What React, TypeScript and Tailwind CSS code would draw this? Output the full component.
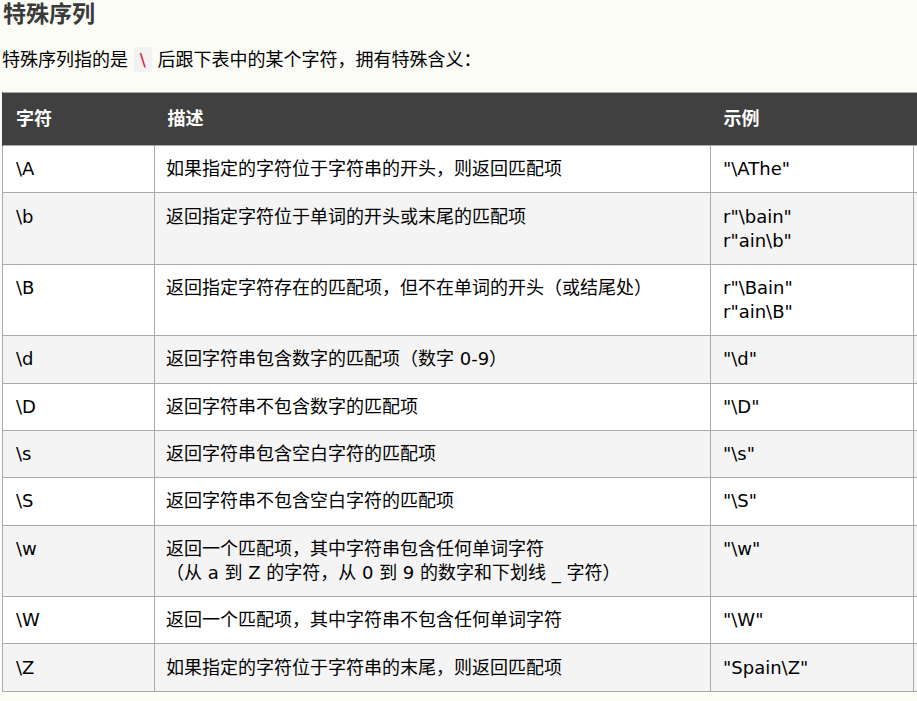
const rows: { ch: string; desc: string[]; ex: string[] }[] = [
  { ch: '\\A', desc: ['如果指定的字符位于字符串的开头，则返回匹配项'], ex: ['"\\AThe"'] },
  { ch: '\\b', desc: ['返回指定字符位于单词的开头或末尾的匹配项'], ex: ['r"\\bain"', 'r"ain\\b"'] },
  { ch: '\\B', desc: ['返回指定字符存在的匹配项，但不在单词的开头（或结尾处）'], ex: ['r"\\Bain"', 'r"ain\\B"'] },
  { ch: '\\d', desc: ['返回字符串包含数字的匹配项（数字 0-9）'], ex: ['"\\d"'] },
  { ch: '\\D', desc: ['返回字符串不包含数字的匹配项'], ex: ['"\\D"'] },
  { ch: '\\s', desc: ['返回字符串包含空白字符的匹配项'], ex: ['"\\s"'] },
  { ch: '\\S', desc: ['返回字符串不包含空白字符的匹配项'], ex: ['"\\S"'] },
  {
    ch: '\\w',
    desc: ['返回一个匹配项，其中字符串包含任何单词字符', '（从 a 到 Z 的字符，从 0 到 9 的数字和下划线 _ 字符）'],
    ex: ['"\\w"'],
  },
  { ch: '\\W', desc: ['返回一个匹配项，其中字符串不包含任何单词字符'], ex: ['"\\W"'] },
  { ch: '\\Z', desc: ['如果指定的字符位于字符串的末尾，则返回匹配项'], ex: ['"Spain\\Z"'] },
]

export default function App() {
  return (
    <div className="h-[701px] w-full overflow-hidden bg-[#fcfcf7] pl-[2px] font-['DejaVu_Sans','Noto_Sans_CJK_SC',sans-serif] text-[18px] leading-[24px] text-black">
      <h2 className="pl-[1px] text-[23px] font-bold leading-[28px] text-[#3a3a3a]">特殊序列</h2>
      <p className="mt-[20px]">
        特殊序列指的是{' '}
        <code className="bg-[#f2f2f2] px-[6px] py-[2px] font-['DejaVu_Sans',sans-serif] text-[#dc143c]">\</code>{' '}
        后跟下表中的某个字符，拥有特殊含义：
      </p>
      <table className="mt-[20px] w-[960px] table-fixed border-collapse border border-[#aaaaaa]">
        <colgroup>
          <col className="w-[152px]" />
          <col className="w-[556px]" />
          <col className="w-[203px]" />
          <col />
        </colgroup>
        <thead>
          <tr className="bg-[#404040] text-left text-white">
            <th className="border-l border-[#404040] py-[14px] pl-[13px] font-bold">字符</th>
            <th className="py-[14px] pl-[13px] font-bold">描述</th>
            <th className="py-[14px] pl-[13px] font-bold">示例</th>
            <th />
          </tr>
        </thead>
        <tbody>
          {rows.map((r, i) => (
            <tr key={r.ch} className={i % 2 === 0 ? 'bg-white' : 'bg-[#f4f4f4]'}>
              <td className="border border-[#aaaaaa] px-[13px] py-[11.2px] align-top">{r.ch}</td>
              <td className="border border-[#aaaaaa] px-[11px] py-[11.2px] align-top">
                {r.desc.map((d) => (
                  <div key={d}>{d}</div>
                ))}
              </td>
              <td className="border border-[#aaaaaa] px-[12px] py-[11.2px] align-top">
                {r.ex.map((e) => (
                  <div key={e}>{e}</div>
                ))}
              </td>
              <td className="border border-[#aaaaaa]" />
            </tr>
          ))}
        </tbody>
      </table>
    </div>
  )
}
